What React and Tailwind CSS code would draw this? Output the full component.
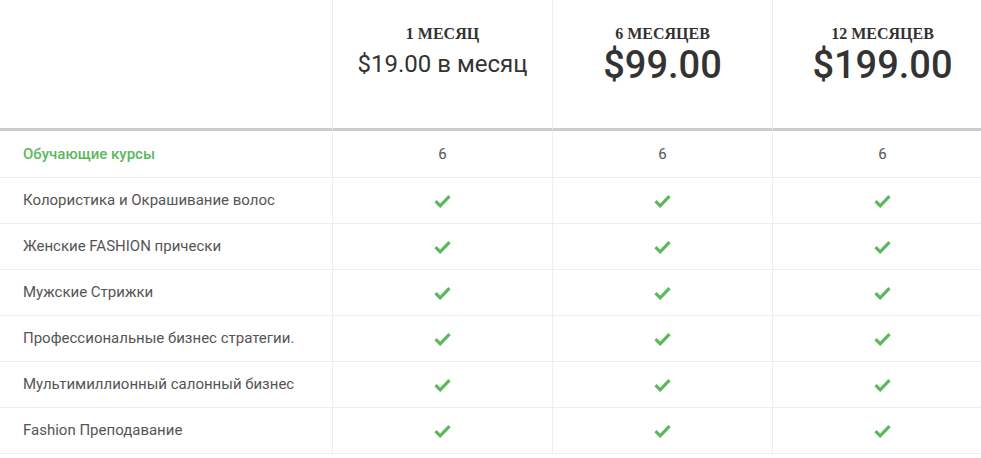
import React from "react";

const Check = () => (
  <svg width="17" height="14" viewBox="0 0 17 14" className="block">
    <path d="M1.5 7.2 L6.2 11.8 L15.5 2.2" fill="none" stroke="#5cb85c" strokeWidth="3.2" strokeLinecap="butt" strokeLinejoin="miter" />
  </svg>
);

const rows = [
  "Колористика и Окрашивание волос",
  "Женские FASHION прически",
  "Мужские Стрижки",
  "Профессиональные бизнес стратегии.",
  "Мультимиллионный салонный бизнес",
  "Fashion Преподавание",
];

const plans = [
  { label: "1 МЕСЯЦ", price: "$19.00 в месяц", small: true },
  { label: "6 МЕСЯЦЕВ", price: "$99.00" },
  { label: "12 МЕСЯЦЕВ", price: "$199.00" },
];

export default function App() {
  return (
    <div className="w-[981px] h-[458px] overflow-hidden bg-white" style={{ fontFamily: "Roboto, 'Liberation Sans', sans-serif" }}>
      <div className="w-[992px] grid grid-cols-[332px_220px_220px_220px]">
        <div className="h-[131px] border-b-[3px] border-[#cccccc]"></div>
        {plans.map((p) => (
          <div key={p.label} className="h-[131px] border-l border-[#eeeeee] border-b-[3px] border-b-[#cccccc] flex flex-col items-center pt-[23px]">
            <div className="text-[16px] font-bold text-[#333] leading-[22px]" style={{ fontFamily: "'Liberation Serif', serif" }}>{p.label}</div>
            {p.small ? (
              <div className="text-[24px] text-[#333] leading-[28px] mt-[5px]">{p.price}</div>
            ) : (
              <div className="text-[38px] font-medium text-[#333] leading-[44px] mt-[-2px]">{p.price}</div>
            )}
          </div>
        ))}

        <div className="h-[47px] border-b border-[#eeeeee] flex items-center pl-[23px] text-[15px] font-medium text-[#5cb85c]">Обучающие курсы</div>
        {plans.map((p) => (
          <div key={p.label} className="h-[47px] border-b border-l border-[#eeeeee] flex items-center justify-center text-[15px] text-[#555]">6</div>
        ))}

        {rows.map((r) => (
          <React.Fragment key={r}>
            <div className="h-[46px] border-b border-[#eeeeee] flex items-center pl-[23px] text-[15px] text-[#555]">{r}</div>
            {plans.map((p) => (
              <div key={p.label} className="h-[46px] border-b border-l border-[#eeeeee] flex items-center justify-center">
                <Check />
              </div>
            ))}
          </React.Fragment>
        ))}
      </div>
    </div>
  );
}
